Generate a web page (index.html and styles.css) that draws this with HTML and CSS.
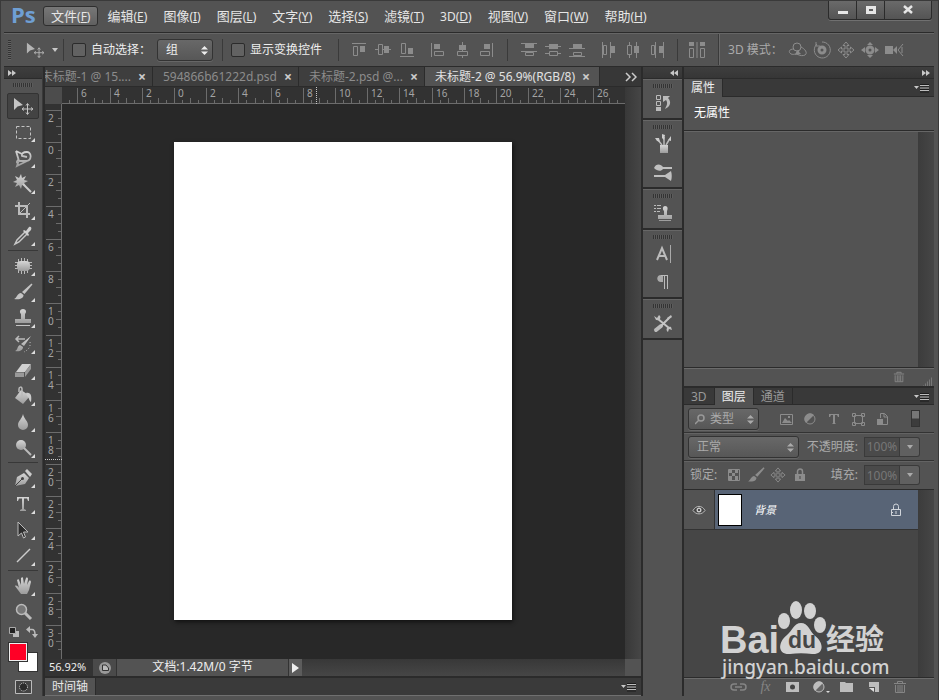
FILE: index.html
```html
<!DOCTYPE html>
<html lang="zh-CN">
<head>
<meta charset="utf-8">
<title>Ps</title>
<link rel="stylesheet" href="styles.css">
</head>
<body>
<svg class="defs" aria-hidden="true">
  <defs>
    <linearGradient id="metal" x1="0" y1="0" x2="0" y2="1"><stop offset="0" stop-color="#d6d6d6"/><stop offset="1" stop-color="#9c9c9c"/></linearGradient>
  </defs>
  <symbol id="move" viewBox="0 0 20 20"><path d="M1 2v12l3.500-3.500L10 9z" fill="currentColor"/><path d="M14.500 8v10M9.500 13h10M13 9.500l1.500-2 1.500 2M13 16.500l1.500 2 1.500-2M11 11.500L9 13l2 1.500M18 11.500l2 1.500-2 1.500" fill="none" stroke="currentColor"/></symbol>
  <symbol id="move4" viewBox="0 0 18 18"><path d="M9 1l3 3.500h-2V8h3.500V6L17 9l-3.500 3v-2H10v3.500h2L9 17l-3-3.500h2V10H4.500v2L1 9l3.500-3v2H8V4.500H6z" fill="none" stroke="currentColor"/></symbol>
  <symbol id="trash" viewBox="0 0 14 14"><path d="M1 3.500h12M4.500 3V1.500h5V3M2.500 5v7.500h9V5M5 5v7M7 5v7M9 5v7" fill="none" stroke="currentColor"/></symbol>
  <symbol id="lock" viewBox="0 0 12 14"><path d="M3.500 6V3.500a2.500 2.500 0 0 1 5 0V6" fill="none" stroke="currentColor" stroke-width="1.500"/><path d="M1 6h10v7H1z" fill="currentColor"/><path d="M5.500 8h1v3h-1z" fill="#444"/></symbol>
  <symbol id="brush" viewBox="0 0 20 20"><path d="M18.500 1.500l1 1L11.500 12 9 10z" fill="currentColor"/><path d="M8 11l2.500 2c0 3-3 5-9.500 4 3-1 3-5.500 7-6z" fill="currentColor"/></symbol>
  <symbol id="menu" viewBox="0 0 16 10"><path d="M0 3h5L2.500 6z" fill="#c8c8c8"/><path d="M6 1.500h9M6 4h9M6 6.500h9M6 9h9" stroke="#1c1c1c"/><path d="M6 2.500h9M6 5h9M6 7.500h9" stroke="#bdbdbd"/></symbol>
  <symbol id="updown" viewBox="0 0 7 11"><path d="M0 4.500L3.500 1 7 4.500zM0 6.500L3.500 10 7 6.500z" fill="currentColor"/></symbol>
  <symbol id="chev" viewBox="0 0 8 6"><path d="M0 0l4 3-4 3zM4 0l4 3-4 3z" fill="#c8c8c8"/></symbol>
</svg>

<div class="window">
  <header class="menubar">
    <span class="logo">Ps</span>
    <nav class="menus">
      <button class="on">文件<small>(<u>F</u>)</small></button>
      <button>编辑<small>(<u>E</u>)</small></button>
      <button>图像<small>(<u>I</u>)</small></button>
      <button>图层<small>(<u>L</u>)</small></button>
      <button>文字<small>(<u>Y</u>)</small></button>
      <button>选择<small>(<u>S</u>)</small></button>
      <button>滤镜<small>(<u>T</u>)</small></button>
      <button><small>3D(<u>D</u>)</small></button>
      <button>视图<small>(<u>V</u>)</small></button>
      <button>窗口<small>(<u>W</u>)</small></button>
      <button>帮助<small>(<u>H</u>)</small></button>
    </nav>
    <div class="winbtns">
      <button aria-label="最小化"><svg width="12" height="12"><path d="M1 7h10v3H1z" fill="#e6e6e6"/></svg></button>
      <button aria-label="最大化"><svg width="12" height="12"><path d="M2.500 3.500h7v5h-7z" fill="none" stroke="#e6e6e6" stroke-width="3"/></svg></button>
      <button class="close" aria-label="关闭"><svg width="12" height="12"><path d="M2 2l8 7M10 2L2 9" stroke="#e6e6e6" stroke-width="2.500"/></svg></button>
    </div>
  </header>

  <div class="options">
    <i class="vgrip"></i>
    <button class="toolpick" aria-label="移动工具"><svg width="20" height="18"><use href="#move"/></svg><svg width="6" height="4"><path d="M0 0h6L3 4z" fill="#c8c8c8"/></svg></button>
    <i class="sep"></i>
    <label class="check"><input type="checkbox">自动选择：</label>
    <span class="pick group"><select aria-label="自动选择"><option>组</option></select><svg width="7" height="11"><use href="#updown"/></svg></span>
    <i class="sep"></i>
    <label class="check">
      <input type="checkbox">显示变换控件</label>
    <i class="sep wide"></i>
    <div class="cells">
      <svg viewBox="0 0 24 18"><path d="M5 2.500h14M6.500 5.500h4v9h-4z" class="ln"/><path d="M13 5h5v6h-5z" class="fl"/></svg>
      <svg viewBox="0 0 24 18"><path d="M4 8.500h3M11 8.500h9M7.500 3.500h4v10h-4z" class="ln"/><path d="M13 5h5v7h-5z" class="fl"/></svg>
      <svg viewBox="0 0 24 18"><path d="M5 15.500h14M6.500 2.500h4v10h-4z" class="ln"/><path d="M13 7h5v6h-5z" class="fl"/></svg>
    </div>
    <div class="cells g2">
      <svg viewBox="0 0 24 18"><path d="M5.500 2v14M8.500 10.500h9v4h-9z" class="ln"/><path d="M8 3h6v5H8z" class="fl"/></svg>
      <svg viewBox="0 0 24 18"><path d="M12.500 1v9M12.500 14v3M7.500 10.500h10v4h-10z" class="ln"/><path d="M9 4h7v5H9z" class="fl"/></svg>
      <svg viewBox="0 0 24 18"><path d="M18.500 2v14M6.500 10.500h9v4h-9z" class="ln"/><path d="M10 3h6v5h-6z" class="fl"/></svg>
    </div>
    <i class="sep mid"></i>
    <div class="cells g3">
      <svg viewBox="0 0 24 18"><path d="M4 2.500h16M4 10.500h16M8.500 11.500h8v3h-8z" class="ln"/><path d="M8 3h9v4H8z" class="fl"/></svg>
      <svg viewBox="0 0 24 18"><path d="M4 5.500h16M4 12.500h4M16 12.500h4M8.500 10.500h8v4h-8z" class="ln"/><path d="M8 3h9v5H8z" class="fl"/></svg>
      <svg viewBox="0 0 24 18"><path d="M4 7.500h16M4 15.500h16M8.500 11.500h8v3h-8z" class="ln"/><path d="M8 3h9v4H8z" class="fl"/></svg>
    </div>
    <div class="cells g4">
      <svg viewBox="0 0 24 18"><path d="M5.500 1v16M13.500 1v16M6.500 4.500h3v9h-3z" class="ln"/><path d="M14 5h4v7h-4z" class="fl"/></svg>
      <svg viewBox="0 0 24 18"><path d="M8.500 1v3M8.500 13v4M15.500 1v16M6.500 4.500h4v9h-4z" class="ln"/><path d="M13 5h5v7h-5z" class="fl"/></svg>
      <svg viewBox="0 0 24 18"><path d="M10.500 1v16M18.500 1v16M6.500 4.500h3v9h-3z" class="ln"/><path d="M14 5h4v7h-4z" class="fl"/></svg>
    </div>
    <i class="sep"></i>
    <div class="cells g5">
      <svg viewBox="0 0 24 18"><path d="M4 1h5v4H4zM15 1h5v4h-5z" class="fl"/><path d="M4.500 7.500h4v9h-4zM15.500 7.500h4v9h-4zM12 1v16" class="ln"/></svg>
    </div>
    <i class="sep full"></i>
    <span class="dim">3D 模式：</span>
    <div class="cells g6">
      <svg viewBox="0 0 24 18"><circle cx="11" cy="6" r="4" class="ln"/><path d="M8 8C3 8 2 11 5 13c3 1 6 0 8-3M15 6c4 2 7 6 4 8-2 1-5 1-8-1" class="ln"/><path d="M11 9l-2 5 6-1z" class="fl"/></svg>
      <svg viewBox="0 0 24 18"><circle cx="12" cy="9" r="3" class="ln thick"/><path d="M7 3a8 8 0 1 0 5-2M6 1v4h4" class="ln"/></svg>
      <svg viewBox="-3 0 24 18"><use href="#move4" width="18" height="18"/></svg>
      <svg viewBox="0 0 24 18"><circle cx="12" cy="9" r="3" class="ln thick"/><path d="M12 1l3 3H9zM12 17l3-3H9zM3 9l4-3v6zM21 9l-4-3v6z" class="fl"/></svg>
      <svg viewBox="0 0 24 18"><path d="M3 5h8v8H3zM11 9l4-4v8z" class="fl"/><path d="M21 3l-5 6 5 6M20 6v6" class="ln"/></svg>
    </div>
  </div>

  <div class="workspace">
    <aside class="tools">
      <div class="bar"><svg width="8" height="6"><use href="#chev"/></svg></div>
      <i class="grip"></i>
      <button class="tool on" aria-label="移动"><svg viewBox="0 0 20 20"><use href="#move"/></svg></button>
      <button class="tool more" aria-label="选框"><svg viewBox="0 0 20 20"><path d="M3.500 4.500h14v12h-14z" fill="none" stroke="currentColor" stroke-dasharray="3 2"/></svg></button>
      <button class="tool more" aria-label="套索"><svg viewBox="0 0 20 20"><path d="M3 3l3 10h7c6 0 6-9 1-9-4 0-6 2-5 4l5 1M3 3l6 3M6 12c-2 0-3 3-1 3l-1 3 12-6" fill="none" stroke="url(#metal)" stroke-width="1.800"/></svg></button>
      <button class="tool more" aria-label="魔棒"><svg viewBox="0 0 20 20"><path d="M8 0l1 4 4-2-2 4 4 1-4 2 2 3-4-1-1 4-2-4-4 2 2-4-4-1 4-2-2-4 4 2z" fill="url(#metal)"/><path d="M10 10l8 8" stroke="#ccc" stroke-width="2"/></svg></button>
      <button class="tool more" aria-label="裁剪"><svg viewBox="0 0 20 20"><path d="M6 2v12h11M2 6h12v12" fill="none" stroke="#bbb" stroke-width="2"/><path d="M7 13L17 3" stroke="#bbb"/></svg></button>
      <button class="tool more" aria-label="吸管"><svg viewBox="0 0 20 20"><path d="M12 6L4 14l-2 4 4-2 8-8" fill="none" stroke="#c8c8c8" stroke-width="1.500"/><path d="M10 5l1-1 2 1 3-4c2-1 3 1 2 3l-3 3 1 2-1 1z" fill="#d0d0d0"/></svg></button>
      <hr>
      <button class="tool more" aria-label="修补"><svg viewBox="0 0 20 20"><path d="M5.500 3v14M8.500 2v16M11.500 2v16M14.500 3v14M2 6.500h17M2 9.500h17M2 12.500h17" stroke="#bbb"/><rect x="4" y="5" width="13" height="10" rx="4" fill="url(#metal)"/></svg></button>
      <button class="tool more" aria-label="画笔"><svg viewBox="0 0 20 20"><use href="#brush"/></svg></button>
      <button class="tool more" aria-label="图章"><svg viewBox="0 0 20 20"><path d="M10 1c3 0 4 3 2 5v5h6v4H2v-4h6V6C6 4 7 1 10 1z" fill="url(#metal)"/><path d="M3 17.500h14" stroke="#c4c4c4"/></svg></button>
      <button class="tool more" aria-label="历史画笔"><svg viewBox="0 0 20 20"><path d="M18 2l-7 10-3-2zM7 11l3 2c0 3-3 5-8 4 3-1 2-5 5-6z" fill="url(#metal)"/><path d="M3 5h9M6 2L3 5l3 3" fill="none" stroke="#bbb" stroke-width="1.500"/><path d="M17 8c1 5-2 8-6 10" fill="none" stroke="#bbb" stroke-dasharray="1 2"/></svg></button>
      <button class="tool more" aria-label="橡皮擦"><svg viewBox="0 0 20 20"><path d="M9 4h9l-6 8H3z" fill="#d0d0d0"/><path d="M2 12.500h9V17H2zM12 12l6-8v5l-6 8z" fill="#999"/></svg></button>
      <button class="tool more" aria-label="油漆桶"><svg viewBox="0 0 20 20"><path d="M8 4l9 6-7 8-8-6z" fill="url(#metal)"/><path d="M9 11V3c0-3-3-2-3 0v3" fill="none" stroke="#bbb" stroke-width="1.500"/><path d="M13 7c5-1 6 3 5 9-2-1-2-5-4-6z" fill="#ccc"/></svg></button>
      <button class="tool more" aria-label="模糊"><svg viewBox="0 0 20 20"><path d="M10 2c1 5 5 7 5 11a5 5 0 0 1-10 0c0-4 4-6 5-11z" fill="url(#metal)"/></svg></button>
      <button class="tool more" aria-label="减淡"><svg viewBox="0 0 20 20"><circle cx="8" cy="7" r="5" fill="url(#metal)"/><path d="M11 10l7 7" stroke="#bbb" stroke-width="2"/></svg></button>
      <hr>
      <button class="tool more" aria-label="钢笔"><svg viewBox="0 0 20 20"><path d="M2 18L4 9l7-4 5 5-4 6z" fill="url(#metal)"/><path d="M12 3l2-2 5 5-2 3z" fill="#ccc"/><path d="M2 18l7-7" stroke="#444"/><circle cx="9.500" cy="10.500" r="1.500" fill="#444"/></svg></button>
      <button class="tool more" aria-label="文字"><svg viewBox="0 0 20 20"><path d="M4 3h12v4h-1l-1-2.500h-3V15l2 1v1H7v-1l2-1V4.500H6L5 7H4z" fill="url(#metal)"/></svg></button>
      <button class="tool more" aria-label="路径选择"><svg viewBox="0 0 20 20"><path d="M5 2v14l3.500-3 2 5 2-1-2-5H15z" fill="#2d2d2d" stroke="#bbb"/></svg></button>
      <button class="tool more" aria-label="直线"><svg viewBox="0 0 20 20"><path d="M4 16L17 3" stroke="#ccc" stroke-width="1.500"/></svg></button>
      <hr>
      <button class="tool more" aria-label="抓手"><svg viewBox="0 0 20 20"><path d="M8 18c-2-3-4-5-6-8 1-1 3 0 4 2L4 4c1-1 2-1 2 0l2 5V2c1-1 2-1 2 0l1 6 2-6c1-1 2 0 2 1l-1 6 2-4c1-1 2 0 2 1l-2 8-2 4z" fill="url(#metal)"/></svg></button>
      <button class="tool" aria-label="缩放"><svg viewBox="0 0 20 20"><circle cx="8.500" cy="7.500" r="5" fill="#777" stroke="#bbb" stroke-width="1.500"/><path d="M12 11l6 6" stroke="#bbb" stroke-width="3"/></svg></button>
      <div class="mini">
        <svg width="12" height="12"><path d="M5 5h6v6H5z" fill="#bbb"/><path d="M1.500 1.500h6v6h-6z" fill="#222" stroke="#aaa"/></svg>
        <svg width="12" height="12"><path d="M3 3.500h3c2 0 3 1 3 5" fill="none" stroke="#bbb" stroke-width="1.500"/><path d="M4 0v7L0 3.500zM6 8h6l-3 4z" fill="#bbb"/></svg>
      </div>
      <div class="swatches"><button class="back" aria-label="背景色"></button><button class="fore" aria-label="前景色"></button></div>
      <button class="mask" aria-label="快速蒙版"><svg width="17" height="14"><path d="M.5.5h16v13H.5z" fill="#444" stroke="#bbb"/><circle cx="8.500" cy="7" r="4" fill="#2b2b2b" stroke="#ddd" stroke-dasharray="1 1"/></svg></button>
    </aside>

    <main class="doc">
      <div class="tabs">
        <div class="tab first"><span>未标题-1 @ 15....</span><button aria-label="关闭">×</button></div>
        <div class="tab"><span>594866b61222d.psd</span><button aria-label="关闭">×</button></div>
        <div class="tab"><span>未标题-2.psd @...</span><button aria-label="关闭">×</button></div>
        <div class="tab on"><span>未标题-2 @ 56.9%(RGB/8)</span><button aria-label="关闭">×</button></div>
        <button class="overflow" aria-label="更多"><svg width="12" height="10"><path d="M1 1l4 4-4 4M7 1l4 4-4 4" fill="none" stroke="#ccc" stroke-width="1.500"/></svg></button>
      </div>
      <div class="view">
        <div class="corner"></div>
        <svg class="ruler-h" id="rh"></svg>
        <svg class="ruler-v" id="rv"></svg>
        <div class="canvas"><div class="page"></div></div>
        <div class="vscroll"></div>
      </div>
      <div class="status">
        <span class="zoom">56.92%</span>
        <span class="disc"><svg width="14" height="14"><circle cx="7" cy="7" r="6" fill="#999"/><path d="M4.500 4v5.500h6V7L8 4z" fill="#bbb" stroke="#333"/></svg></span>
        <span class="info">文档:1.42M/0 字节</span>
        <button class="play" aria-label="显示"><svg width="7" height="10"><path d="M0 0l7 5-7 5z" fill="#eee"/></svg></button>
        <span class="hscroll"></span>
        <span class="joint"></span>
      </div>
      <div class="timeline"><span class="ttab">时间轴</span><svg width="16" height="10"><use href="#menu"/></svg></div>
    </main>

    <aside class="dock">
      <div class="bar end"><svg class="flip" width="8" height="6"><use href="#chev"/></svg></div>
      <section><i class="grip"></i>
        <button aria-label="历史记录"><svg viewBox="0 0 20 20"><path d="M3.500 2.500h4v4h-4zM3.500 8.500h4v4h-4z" fill="none" stroke="#bbb"/><path d="M3 14h5v4H3z" fill="#bbb"/><path d="M10 3h7l-2 2c4 4 2 9-3 11 2-4 3-6 1-9l-3 2z" fill="#bbb"/></svg></button></section>
      <section><i class="grip"></i>
        <button aria-label="画笔预设"><svg viewBox="0 0 20 20"><path d="M7 11h8v8H7z" fill="url(#metal)"/><path d="M9 11L5 6M11 11V3M13 11l3-5" stroke="#bbb" stroke-width="1.500"/><path d="M2 4l4 0 1 4-3-1zM9 0l3 1-1 5-2-2zM15 6l3-4 0 5z" fill="#ccc"/></svg></button>
        <button aria-label="画笔"><svg viewBox="0 0 20 20"><path d="M1 6c2-5 7-4 9-1l9 0v2h-9c-2 3-6 2-9-1zM1 13h11l6-4c1 3 1 7 0 10l-6-4H1z" fill="#c0c0c0"/></svg></button></section>
      <section><i class="grip"></i>
        <button aria-label="仿制源"><svg viewBox="0 0 20 20"><path d="M1 2.500h2M4 2.500h4M1 5.500h2M4 5.500h4M1 8.500h2M4 8.500h3" stroke="#bbb"/><path d="M12 3c3 0 3 3 2 5v4h5v4H5v-4h6V8c-2-2-1-5 1-5zM6 17h12v1H6z" fill="url(#metal)"/></svg></button></section>
      <section><i class="grip"></i>
        <button aria-label="字符"><svg viewBox="0 0 20 20"><path d="M4 16L9 4l5 12M6 12h6" fill="none" stroke="#bbb" stroke-width="2"/><path d="M17.500 1v18" stroke="#aaa"/></svg></button>
        <button aria-label="段落"><svg viewBox="0 0 20 20"><path d="M15 3H8c-5 0-5 7 0 7h2V3z" fill="#aaa"/><path d="M11.500 3v14M14.500 3v14M8 3.500h7" stroke="#bbb"/></svg></button></section>
      <section><i class="grip"></i>
        <button aria-label="工具预设"><svg viewBox="0 0 20 20"><path d="M3 17l5-4" stroke="#bbb" stroke-width="4" stroke-linecap="round"/><path d="M8 13l8-8M5 6l11 9" stroke="#c4c4c4" stroke-width="2"/><path d="M1 3l3 2 2-3c3 2 1 6-3 5zM19 17l-3-1-1 3c-3-2-1-6 3-5zM14 5l4-3 1 2-4 3z" fill="#c0c0c0"/></svg></button></section>
    </aside>

    <aside class="panels">
      <div class="bar end"><svg width="8" height="6"><use href="#chev"/></svg></div>
      <section class="props">
        <div class="ptabs"><span class="ptab on">属性</span><svg width="16" height="10"><use href="#menu"/></svg></div>
        <div class="none">无属性</div>
        <div class="pbody"><i class="track"></i></div>
        <div class="pfoot"><button aria-label="删除"><svg width="14" height="14"><use href="#trash"/></svg></button><i class="resize"></i></div>
      </section>
      <section class="layers">
        <div class="ptabs"><span class="ptab">3D</span><span class="ptab on">图层</span><span class="ptab">通道</span><svg width="16" height="10"><use href="#menu"/></svg></div>
        <div class="row filter">
          <span class="pick kind"><svg class="mag" width="10" height="11"><circle cx="6" cy="4" r="3" fill="none" stroke="#999" stroke-width="1.500"/><path d="M4 6L0 10" stroke="#999" stroke-width="1.500"/></svg><select aria-label="类型"><option>类型</option></select><svg width="7" height="11"><use href="#updown"/></svg></span>
          <div class="cells">
            <svg viewBox="0 0 24 18"><path d="M6.500 4.500h12v10h-12z" class="ln"/><path d="M8 13l3-5 3 3 1-1 3 3zM14 6h2v2h-2z" class="fl"/></svg>
            <svg viewBox="0 0 24 18"><circle cx="12" cy="9" r="5" class="ln"/><path d="M8 13a5 5 0 0 1 8-8z" class="fl"/></svg>
            <svg viewBox="0 0 24 18"><path d="M7 4h10v3h-1l-1-2h-2v8l1 1h-4l1-1V5H9L8 7H7z" class="fl"/></svg>
            <svg viewBox="0 0 24 18"><path d="M8.500 5.500h8v8h-8zM6.500 3.500h3v3h-3zM15.500 3.500h3v3h-3zM6.500 12.500h3v3h-3zM15.500 12.500h3v3h-3z" class="ln"/></svg>
            <svg viewBox="0 0 24 18"><path d="M10.500 8V3.500h4l3 3v8H13M14 4v3h3" class="ln"/><path d="M7 9h6v6H7z" class="fl"/></svg>
          </div>
          <i class="switch"></i>
        </div>
        <div class="row">
          <span class="pick mode"><select aria-label="混合模式"><option>正常</option></select><svg width="7" height="11"><use href="#updown"/></svg></span>
          <label class="num">不透明度:<input value="100%"></label><button class="drop" aria-label="不透明度"><svg width="6" height="4"><path d="M0 0h6L3 4z" fill="#aaa"/></svg></button>
        </div>
        <div class="row lockrow">
          <span>锁定:</span>
          <div class="cells tight">
            <svg viewBox="0 0 22 18"><path d="M5.500 3.500h11v11h-11z" class="ln"/><path d="M6 4h3v3H6zM12 4h3v3h-3zM9 7h3v3H9zM6 10h3v4H6zM12 10h3v4h-3z" class="fl"/></svg>
            <svg viewBox="0 0 22 18"><use href="#brush" x="2" width="18" height="18"/></svg>
            <svg viewBox="0 0 22 18"><use href="#move4" x="3" y="1" width="16" height="16"/></svg>
            <svg viewBox="0 0 22 18"><use href="#lock" x="5" y="2" width="12" height="14"/></svg>
          </div>
          <label class="num">填充:<input value="100%"></label><button class="drop" aria-label="填充"><svg width="6" height="4"><path d="M0 0h6L3 4z" fill="#aaa"/></svg></button>
        </div>
        <div class="list">
          <div class="entries">
            <div class="layer">
              <button class="eye" aria-label="可见性"><svg width="14" height="12"><path d="M1 6.500C4 1 10 1 13 6.500 10 11 4 11 1 6.500z" fill="#444" stroke="#bbb"/><circle cx="7" cy="6" r="2.500" fill="#ccc"/><circle cx="7" cy="6" r="1" fill="#222"/></svg></button>
              <div class="selected"><i class="thumb"></i><em>背景</em><svg width="12" height="14" viewBox="0 0 12 14"><path d="M3.500 6V3.500a2.500 2.500 0 0 1 5 0V6M1.500 6.500h9v6h-9zM6 8v3M2 9.500h1" fill="none" stroke="#d0d4da"/></svg></div>
            </div>
          </div>
          <i class="track"></i>
        </div>
        <div class="pfoot lfoot">
          <svg viewBox="0 0 27 16" class="off"><path d="M12 5H9a3 3 0 0 0 0 6h3M15 5h3a3 3 0 0 1 0 6h-3M10 8h7" fill="none" stroke="currentColor" stroke-width="1.500"/></svg>
          <span class="off fx">fx</span>
          <svg viewBox="0 0 27 16"><path d="M7 3h13v10H7z" fill="currentColor"/><circle cx="13.500" cy="8" r="2.500" fill="#444"/></svg>
          <svg viewBox="0 0 27 16"><circle cx="13" cy="8" r="5" fill="#666" stroke="currentColor"/><path d="M9 12a5 5 0 0 1 8-8z" fill="currentColor"/><path d="M20 12h4l-2 2z" fill="#ddd"/></svg>
          <svg viewBox="0 0 27 16"><path d="M7 3h5l1 1h7v9H7z" fill="currentColor"/></svg>
          <svg viewBox="0 0 27 16"><path d="M9 3h10v10h-4V8H9z" fill="currentColor"/><path d="M9 9l5 4V9z" fill="#ddd"/></svg>
          <svg viewBox="-6 -1 27 16" class="off"><use href="#trash" width="14" height="14"/></svg>
        </div>
      </section>
      <svg class="brand" width="176" height="84" viewBox="0 0 176 84" fill="#d2d2d2">
        <text x="1" y="53" class="b1">Bai</text>
        <ellipse cx="65" cy="21" rx="6" ry="8"/><ellipse cx="77" cy="10" rx="6" ry="9"/><ellipse cx="91" cy="11" rx="6" ry="8"/><ellipse cx="101" cy="25" rx="6" ry="8"/>
        <path d="M82 23c7 0 9 8 13 12 11 8 10 20-2 19-7-1-15-1-22 0-12 1-13-11-3-19 5-4 7-12 14-12z"/>
        <text x="69" y="48" class="b2">du</text>
        <text x="107" y="50" class="b3">经验</text>
        <text x="3" y="74" class="b4">jingyan.baidu.com</text>
      </svg>
    </aside>
  </div>
</div>
<script src="rulers.js"></script>
</body>
</html>
```
FILE: styles.css
```css
* { box-sizing: border-box; }
body {
  margin: 0;
  background: #535353;
  color: #e6e6e6;
  font: 12px/16px "Noto Sans", "Noto Sans CJK SC", sans-serif;
}
button, select, input { font: inherit; color: inherit; margin: 0; padding: 0; border: 0; background: none; }
svg, i { display: block; flex: none; }
.defs { position: absolute; width: 0; height: 0; }

.window {
  display: grid;
  grid-template-rows: 32px 34px minmax(0, 1fr);
  height: 100vh;
  min-height: 690px;
  padding: 0 5px 4px 4px;
  box-shadow: inset 0 1px #3a3a3a, inset 1px 0 #3a3a3a, inset -1px 0 #3a3a3a;
}

.menubar { display: flex; align-items: flex-start; }
.logo { width: 39px; padding-left: 7px; font: bold 22px/28px "Open Sans", sans-serif; color: #6f9fd4; }
.menus { display: flex; gap: 2px; padding-top: 6px; }
.menus button { height: 20px; padding: 0 7px; font-size: 13px; line-height: 18px; white-space: nowrap; }
.menus small { font-size: 12px; }
.menus .on { border: 1px solid #2e2e2e; border-radius: 3px; background: linear-gradient(#777, #606060); }
.winbtns { display: flex; margin: 1px 2px 0 auto; border: 1px solid #2b2b2b; border-top: 0; border-radius: 0 0 3px 3px; box-shadow: 0 1px #707070; background: linear-gradient(#6a6a6a, #545454); }
.winbtns button { display: grid; place-items: center; width: 28px; height: 18px; border-right: 1px solid #2b2b2b; }
.winbtns .close { width: 46px; border-right: 0; }

.options { display: flex; align-items: center; border-top: 1px solid #2b2b2b; box-shadow: inset 0 1px #666; padding-left: 4px; color: #eee; }
.vgrip { width: 3px; height: 20px; background: repeating-linear-gradient(#333 0 1px, #626262 1px 2px); }
.toolpick { display: flex; align-items: center; gap: 7px; margin: 0 5px 0 14px; color: #b4b4b4; }
.sep { width: 1px; height: 22px; background: #3a3a3a; }
.sep.full { height: 31px; margin: 0 9px; box-shadow: 1px 0 #696969; }
.sep.wide { margin: 0 8px 0 16px; }
.sep.mid { margin: 0 9px; }
.check { display: flex; align-items: center; gap: 5px; margin-left: 8px; white-space: nowrap; }
.check input { appearance: none; width: 14px; height: 14px; border: 1px solid #2b2b2b; border-radius: 2px; background: #626262; }
.pick { position: relative; display: block; height: 22px; border: 1px solid #333; border-radius: 3px; background: linear-gradient(#686868, #575757); box-shadow: 0 1px #666; }
.pick select { appearance: none; width: 100%; height: 20px; padding-left: 8px; }
.pick svg { position: absolute; right: 4px; top: 5px; pointer-events: none; }
.group { width: 56px; margin: 0 9px 0 6px; }
.cells { display: flex; align-items: center; color: #8c8c8c; }
.cells svg { width: 24px; height: 18px; }
.cells .ln { fill: none; stroke: #8c8c8c; }
.cells .thick { stroke-width: 3px; }
.cells .fl { fill: #8c8c8c; }
.g2 { margin-left: 7px; }
.g4 { margin: 0 8px; }
.g5 { margin-left: 7px; }
.dim { width: 58px; white-space: nowrap; color: #aaa; }

.workspace { display: grid; grid-template-columns: 39px minmax(0, 1fr) 39px 250px; gap: 2px; background: #2b2b2b; padding-top: 1px; }
.workspace > * { min-height: 0; }
.bar { display: flex; align-items: center; height: 12px; padding: 0 4px; background: linear-gradient(#3e3e3e, #363636); border-bottom: 1px solid #2b2b2b; }
.bar.end { justify-content: flex-end; }
.flip { transform: scaleX(-1); }
.grip { width: 20px; height: 4px; margin: 0 auto; background: repeating-linear-gradient(90deg, #333 0 1px, #5c5c5c 1px 2px); }

.tools { display: flex; flex-direction: column; background: #535353; color: #c4c4c4; border-right: 1px solid #3a3a3a; }
.tools > .grip { margin: 4px auto 6px; }
.tool { position: relative; display: grid; place-items: center; flex: none; width: 32px; height: 26px; margin: 0 auto; }
.tool svg { width: 20px; height: 20px; }
.tool.on { border: 1px solid #333; border-radius: 2px; background: #434343; }
.tool.more::after { content: ""; position: absolute; right: 4px; bottom: 3px; border: 2px solid; border-color: transparent #ddd #ddd transparent; }
.tools hr { width: 30px; height: 1px; margin: 1px auto 2px; border: 0; background: #383838; }
.mini { display: flex; justify-content: center; gap: 6px; margin-top: 1px; }
.swatches { display: grid; width: 30px; height: 30px; margin: 4px auto 8px; }
.swatches button { grid-area: 1 / 1; width: 20px; height: 20px; border: 1px solid #333; }
.fore { background: #ff0026; box-shadow: inset 0 0 0 1px #eee; }
.back { background: #fff; place-self: end; }
.mask { margin: 0 auto; }

.doc { display: grid; grid-template-rows: 20px minmax(0, 1fr) 17px 20px; background: #333; }
.tabs { display: flex; background: #373737; border-bottom: 1px solid #2b2b2b; overflow: hidden; }
.tab { display: flex; flex: none; align-items: center; gap: 7px; padding: 0 6px 0 10px; border-right: 1px solid #2b2b2b; background: #3e3e3e; color: #8c8c8c; white-space: nowrap; }
.tab.first { width: 108px; justify-content: flex-end; }
.tab.on { padding-right: 9px; background: #535353; color: #e2e2e2; }
.tab button { width: 8px; font-size: 14px; font-weight: bold; line-height: 14px; color: #ccc; }
.overflow { margin: 0 4px 0 auto; }
.view { display: grid; grid-template: 17px minmax(0, 1fr) / 17px minmax(0, 1fr) 16px; }
.corner { background: #4c4c4c; }
.ruler-h, .ruler-v { width: 100%; height: 100%; overflow: hidden; background: #323232; }
.ruler-v { grid-row: 2; grid-column: 1; }
#rh text, #rv text { font: 10px "Noto Sans", sans-serif; fill: #a4a4a4; }
#rh path, #rv path { stroke: #6c6c6c; fill: none; }
#rh .mark, #rv .mark { stroke: #c8c8c8; stroke-dasharray: 1 1; }
.canvas { grid-row: 2; grid-column: 2; overflow: hidden; background: #282828; }
.page { width: 338px; height: 478px; margin: 38px 0 0 112px; background: #fff; box-shadow: 1px 2px 4px #111; }
.vscroll { grid-row: 1 / 3; grid-column: 3; background: linear-gradient(90deg, #383838, #464646); }
.status { display: flex; color: #eee; background: #333; font-size: 11px; }
.zoom { width: 48px; padding-left: 4px; }
.disc { display: grid; place-items: center; width: 23px; background: #4a4a4a; }
.info { width: 171px; margin-left: 1px; background: #535353; text-align: center; font-size: 12px; white-space: nowrap; }
.play { display: grid; place-items: center; width: 13px; margin-left: 1px; background: #5c5c5c; }
.hscroll { flex: 1; background: linear-gradient(#383838, #464646); }
.joint { width: 16px; background: #535353; }
.timeline { display: flex; align-items: center; justify-content: space-between; padding-right: 4px; border-top: 2px solid #2b2b2b; border-bottom: 1px solid #707070; background: #3a3a3a; }
.ttab { padding: 0 7px; border-right: 1px solid #2b2b2b; background: #535353; line-height: 17px; }

.dock { background: #535353; }
.dock section { padding: 4px 0 1px; border-top: 1px solid #666; border-bottom: 2px solid #2b2b2b; }
.dock .grip { margin-bottom: 1px; }
.dock button { display: grid; place-items: center; width: 28px; height: 28px; margin: 0 auto; }
.dock button svg { width: 20px; height: 20px; }

.panels { position: relative; display: flex; flex-direction: column; background: #535353; }
.ptabs { display: flex; flex: none; height: 18px; padding-right: 4px; align-items: center; background: #393939; box-shadow: inset 0 -1px #2b2b2b; }
.ptabs svg { margin-left: auto; }
.ptab { height: 18px; padding: 0 7px; line-height: 18px; border-right: 1px solid #2b2b2b; color: #999; }
.ptab.on { background: #535353; color: #eee; }
.props { display: flex; flex-direction: column; height: 307px; }
.none { height: 34px; padding: 8px 10px; border-bottom: 1px solid #2b2b2b; color: #fff; }
.pbody { display: flex; flex: 1; justify-content: flex-end; border-top: 1px solid #666; }
.track { width: 16px; background: linear-gradient(90deg, #3c3c3c, #464646); }
.pfoot { display: flex; height: 19px; align-items: center; justify-content: flex-end; gap: 18px; border-top: 1px solid #2b2b2b; box-shadow: inset 0 1px #6b6b6b; color: #8c8c8c; }
.pfoot button svg { width: 12px; height: 14px; }
.resize { align-self: flex-end; width: 10px; height: 10px; margin-right: 1px; background: repeating-linear-gradient(90deg, #777 0 1px, transparent 1px 2px); clip-path: polygon(100% 0, 100% 100%, 0 100%); }
.layers { display: flex; flex: 1; min-height: 0; flex-direction: column; border-top: 2px solid #2b2b2b; color: #aaa; }
.layers .ptabs, .layers .ptab { height: 17px; line-height: 17px; }
.row { display: flex; flex: none; align-items: center; height: 28px; padding: 0 14px 0 4px; border-bottom: 1px solid #333; box-shadow: 0 1px #636363; white-space: nowrap; }
.kind { width: 71px; }
.kind select { padding-left: 21px; }
.pick .mag { left: 6px; right: auto; }
.kind + .cells { margin-left: 15px; }
.switch { width: 9px; height: 17px; margin-left: auto; border: 1px solid #333; background: linear-gradient(#777 0 7px, #3c3c3c 8px); }
.mode { width: 111px; }
.num { display: flex; align-items: center; gap: 6px; margin-left: auto; }
.num input { width: 36px; height: 20px; border: 1px solid #3a3a3a; background: #4a4a4a; color: #777; text-align: center; }
.drop { display: grid; place-items: center; width: 20px; height: 20px; border: 1px solid #3a3a3a; border-left: 0; border-radius: 0 3px 3px 0; background: #606060; }
.lockrow { padding-left: 6px; border-bottom-color: #2b2b2b; height: 29px; box-shadow: none; }
.tight { margin-left: 6px; }
.tight svg { width: 22px; height: 18px; }
.list { display: flex; flex: 1; min-height: 0; background: #464646; }
.entries { flex: 1; }
.layer { display: flex; height: 40px; border-bottom: 1px solid #333; background: #535353; }
.eye { display: grid; place-items: center; width: 31px; border-right: 1px solid #333; }
.selected { display: flex; flex: 1; align-items: center; padding: 0 16px 0 3px; background: #586476; color: #fff; font-size: 11px; }
.thumb { width: 24px; height: 32px; border: 1px solid #000; background: #fff; }
.selected em { flex: 1; margin-left: 12px; }
.lfoot { flex: none; justify-content: flex-start; gap: 0; padding-left: 41px; color: #bdbdbd; }
.lfoot svg, .fx { width: 27px; height: 16px; }
.lfoot .off { color: #858585; }
.fx { font: italic 14px/16px "Liberation Serif", serif; text-align: center; }
.brand { position: absolute; right: 39px; bottom: 12px; pointer-events: none; }
.b1 { font: bold 38px "Liberation Sans", sans-serif; }
.b2 { font: bold 23px "Liberation Sans", sans-serif; fill: #464646; }
.b3 { font: bold 29px "Noto Sans CJK SC", sans-serif; }
.b4 { font: 500 19px "Noto Sans", sans-serif; }
```
FILE: rulers.js
```js
// Each labelled step spans two centimetres; every step has four subdivisions.
const STEP = 32.2;

function build(id, origin, first, count, vertical, mark) {
  let lines = '', texts = '';
  for (let k = first; k < first + count; k++) {
    for (let q = 0; q < 4; q++) {
      const p = Math.round(origin + (k + q / 4) * STEP) + 0.5;
      const start = q === 0 ? 1 : q === 2 ? 11 : 13;
      lines += vertical ? `M${start} ${p}H17` : `M${p} ${start}V17`;
    }
    const at = Math.round(origin + k * STEP);
    if (at < 0) continue;
    const label = String(Math.abs(k * 2));
    if (vertical) {
      [...label].forEach((c, i) => { texts += `<text x="3" y="${at + 12 + i * 10}">${c}</text>`; });
    } else {
      texts += `<text x="${at + 4}" y="10">${label}</text>`;
    }
  }
  const edge = vertical ? 'M16.5 0V2000' : 'M0 16.5H3000';
  const dots = vertical ? `M0 ${mark}.5H17` : `M${mark}.5 0V17`;
  document.getElementById(id).innerHTML = `<path d="${lines}${edge}"/><path class="mark" d="${dots}"/>${texts}`;
}

build('rh', 112, -4, 18, false, 254);
build('rv', 38, -2, 18, true, 355);
```
